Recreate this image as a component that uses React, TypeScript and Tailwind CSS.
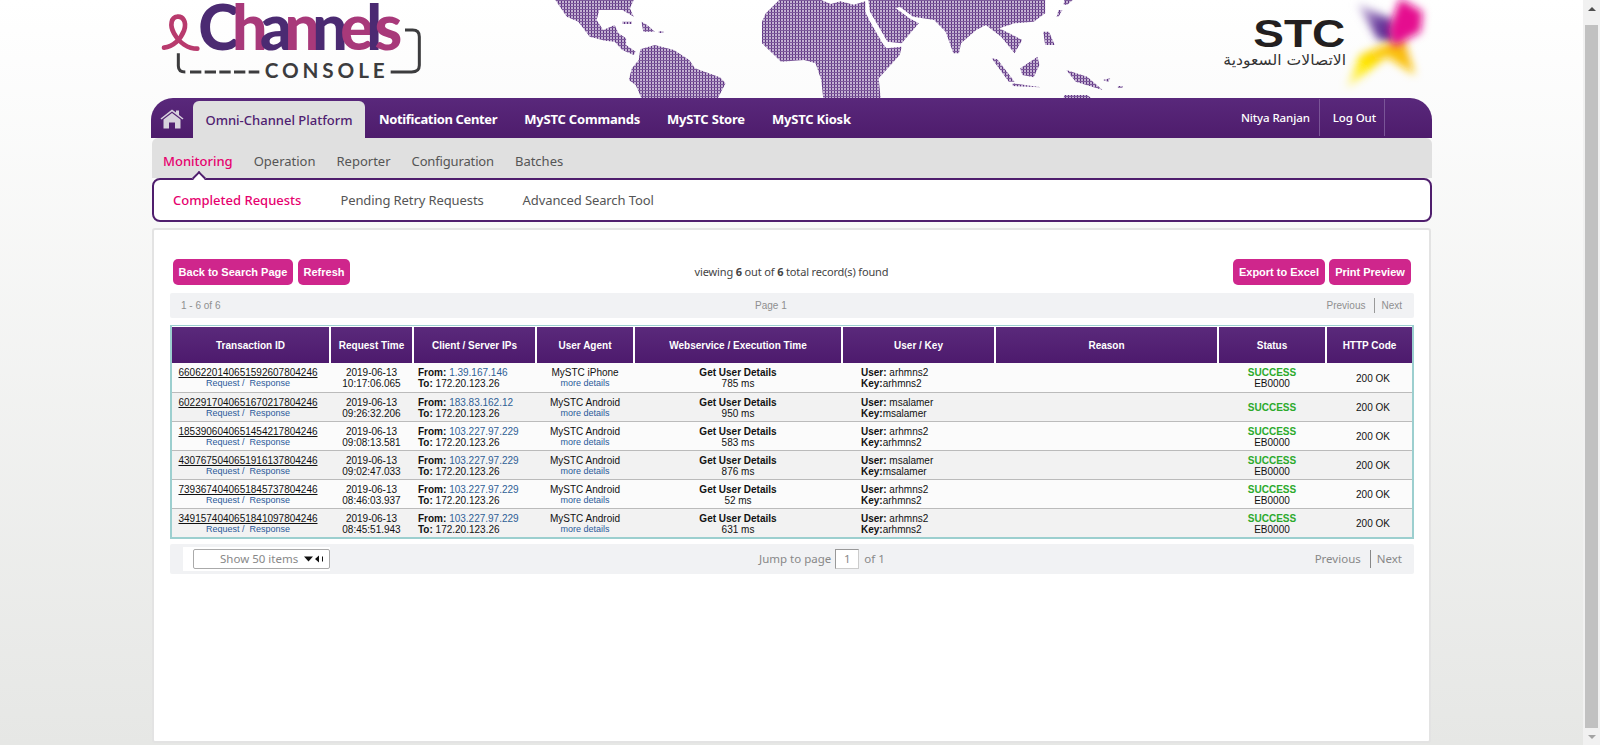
const rows = [
  { id: "6606220140651592607804246", date: "2019-06-13", time: "10:17:06.065", ip: "1.39.167.146", agent: "MySTC iPhone", ms: "785 ms", user: "arhmns2", code: "EB0000" },
  { id: "6022917040651670217804246", date: "2019-06-13", time: "09:26:32.206", ip: "183.83.162.12", agent: "MySTC Android", ms: "950 ms", user: "msalamer", code: "" },
  { id: "1853906040651454217804246", date: "2019-06-13", time: "09:08:13.581", ip: "103.227.97.229", agent: "MySTC Android", ms: "583 ms", user: "arhmns2", code: "EB0000" },
  { id: "4307675040651916137804246", date: "2019-06-13", time: "09:02:47.033", ip: "103.227.97.229", agent: "MySTC Android", ms: "876 ms", user: "msalamer", code: "EB0000" },
  { id: "7393674040651845737804246", date: "2019-06-13", time: "08:46:03.937", ip: "103.227.97.229", agent: "MySTC Android", ms: "52 ms", user: "arhmns2", code: "EB0000" },
  { id: "3491574040651841097804246", date: "2019-06-13", time: "08:45:51.943", ip: "103.227.97.229", agent: "MySTC Android", ms: "631 ms", user: "arhmns2", code: "EB0000" },
];

const columns = [
  { label: "Transaction ID", width: "w-[158px]" },
  { label: "Request Time", width: "w-[83px]" },
  { label: "Client / Server IPs", width: "w-[123px]" },
  { label: "User Agent", width: "w-[98px]" },
  { label: "Webservice / Execution Time", width: "w-[208px]" },
  { label: "User / Key", width: "w-[153px]" },
  { label: "Reason", width: "w-[223px]" },
  { label: "Status", width: "w-[108px]" },
  { label: "HTTP Code", width: "w-[86px]" },
];

const MAP_SHAPES = [
  "40,0 245,0 235,25 245,50 215,30 155,30 148,60 165,90 195,75 205,100 225,115 225,135 250,155 245,165 215,150 195,125 170,122 130,110 100,65 70,50",
  "215,65 240,65 240,72 215,72",
  "265,65 280,75 300,95 270,95",
  "310,94 322,94 322,99 310,99",
  "262,148 300,135 350,150 390,180 405,205 470,232 485,250 465,294 265,294 250,255 232,240 240,205 258,180",
  "580,65 590,40 625,0 735,0 760,12 785,4 820,14 850,4 850,35 860,60 895,130 905,145 945,140 940,165 885,235 890,294 740,294 735,240 720,190 690,180 630,185 580,130",
  "858,0 1320,0 1320,40 1290,65 1240,70 1200,85 1260,120 1240,160 1205,110 1165,75 1140,90 1100,130 1095,160 1080,160 1060,95 1030,60 975,50 940,20 930,25 965,55 990,70 945,130 908,125 875,60 862,35",
  "1180,175 1195,178 1240,245 1225,245",
  "1255,205 1300,170 1305,195 1290,232 1260,225",
  "1235,250 1310,262 1235,258",
  "1315,95 1330,95 1345,135 1320,135",
  "1375,210 1430,230 1470,270 1400,245",
  "1370,285 1430,285 1440,294 1368,294",
  "1510,258 1522,258 1522,263 1510,263",
  "1470,240 1490,235 1485,245",
  "1370,0 1392,0 1378,14 1368,14",
  "1355,30 1365,30 1355,50 1350,50",
];

function WorldMap() {
  return (
    <svg width="600" height="98" viewBox="0 0 600 98" className="block">
      <defs>
        <pattern id="dots" width="3" height="3" patternUnits="userSpaceOnUse">
          <rect width="3" height="3" fill="#c4b2d3" />
          <rect width="1" height="3" fill="#5f3583" />
          <rect width="3" height="1" fill="#7d5a9b" />
        </pattern>
        <clipPath id="land">
          {MAP_SHAPES.map((p) => (
            <polygon key={p} points={p} transform="scale(0.3827 0.3333)" />
          ))}
        </clipPath>
      </defs>
      <rect width="600" height="98" fill="url(#dots)" clipPath="url(#land)" />
    </svg>
  );
}

function ChannelsLogo() {
  return (
    <svg width="270" height="90" viewBox="0 0 810 270" className="block">
      <path d="M12 143 C40 140 62 118 72 92 C82 62 66 48 52 50 C34 52 28 75 42 100 C58 128 84 146 112 146" fill="none" stroke="#b83a6d" strokeWidth="14" strokeLinecap="round" />
      <path d="M55 160 V198 Q55 216 76 216" fill="none" stroke="#3c3c3e" strokeWidth="9" />
      <path d="M90 216 H298" fill="none" stroke="#3c3c3e" strokeWidth="9" strokeDasharray="34 10" />
      <path d="M692 216 H755 Q778 216 778 196 V110 Q778 90 758 90 H735" fill="none" stroke="#3c3c3e" strokeWidth="9" />
      <text x="115" y="150" fontFamily="Lato, sans-serif" fontWeight="900" fontSize="188" textLength="612" lengthAdjust="spacing">
        <tspan fill="#4b2a72">C</tspan>
        <tspan fill="#a8397a">h</tspan>
        <tspan fill="#4b2a72">a</tspan>
        <tspan fill="#a8397a">n</tspan>
        <tspan fill="#4b2a72">n</tspan>
        <tspan fill="#a8397a">e</tspan>
        <tspan fill="#4b2a72">l</tspan>
        <tspan fill="#a8397a">s</tspan>
      </text>
      <text x="314" y="235" fontFamily="Lato, sans-serif" fontWeight="700" fontSize="62" fill="#3c3c3e" textLength="360" lengthAdjust="spacing">CONSOLE</text>
    </svg>
  );
}

function StcLogo() {
  return (
    <svg width="230" height="95" viewBox="0 0 690 285" className="block">
      <defs>
        <filter id="soft" x="-50%" y="-50%" width="200%" height="200%">
          <feGaussianBlur stdDeviation="12" />
        </filter>
        <linearGradient id="wing" x1="0" y1="0" x2="1" y2="1">
          <stop offset="0" stopColor="#e2d9ee" />
          <stop offset="0.55" stopColor="#6b3d9e" />
          <stop offset="1" stopColor="#4f2686" />
        </linearGradient>
        <linearGradient id="flame" x1="0" y1="1" x2="1" y2="0">
          <stop offset="0" stopColor="#fff6a0" />
          <stop offset="0.35" stopColor="#ffe900" />
          <stop offset="1" stopColor="#f59a1c" />
        </linearGradient>
      </defs>
      <polygon points="440,10 550,60 560,125 505,120" fill="url(#wing)" filter="url(#soft)" />
      <polygon points="410,265 450,165 580,110 615,225 530,170" fill="url(#flame)" filter="url(#soft)" />
      <polygon points="570,-5 638,35 632,95 550,140 535,90" fill="#e5108f" filter="url(#soft)" />
      <text x="130" y="140" fontFamily="Liberation Sans, sans-serif" fontWeight="700" fontSize="114" fill="#231f20" textLength="276" lengthAdjust="spacingAndGlyphs">STC</text>
      <text x="408" y="195" direction="rtl" fontFamily="DejaVu Sans, sans-serif" fontSize="44" fill="#333333" textLength="368" lengthAdjust="spacingAndGlyphs">الاتصالات السعودية</text>
    </svg>
  );
}

function HomeIcon() {
  return (
    <svg width="24" height="20" viewBox="0 0 24 20">
      <path d="M0.5 9.5 L12 0.5 L16 3.5 V1.5 H19 V6 L23.5 9.5 L22.5 10.5 L12 2.5 L1.5 10.5 Z" fill="#d8d2dd" />
      <path d="M3.5 10.5 L12 4 L20.5 10.5 V19.5 H15 V13.5 H9 V19.5 H3.5 Z" fill="#d8d2dd" />
    </svg>
  );
}

function Scrollbar() {
  return (
    <div className="flex h-[745px] w-[17px] shrink-0 flex-col bg-[#f1f1f1]">
      <div className="flex h-[25px] items-center justify-center pb-[8px]">
        <div className="h-0 w-0 border-x-[4px] border-b-[4px] border-x-transparent border-b-[#505050]" />
      </div>
      <div className="ml-[2px] w-[13px] flex-1 bg-[#c1c1c1]" />
      <div className="flex h-[17px] items-center justify-center">
        <div className="h-0 w-0 border-x-[4px] border-t-[4px] border-x-transparent border-t-[#a3a3a3]" />
      </div>
    </div>
  );
}

function PinkButton({ children, className }: { children: string; className: string }) {
  return (
    <button className={`h-[26px] rounded-[5px] bg-[#cf268c] text-center text-[11px] font-bold text-white ${className}`}>
      {children}
    </button>
  );
}

export default function App() {
  return (
    <div className="flex h-[745px] overflow-hidden font-['Noto_Sans',sans-serif]">
      <div className="h-[745px] min-w-0 flex-1 bg-gradient-to-b from-white to-[#e6e7e5]">
        <header className="flex h-[98px] overflow-hidden">
          <div className="ml-[160px] w-[380px]">
            <ChannelsLogo />
          </div>
          <WorldMap />
          <div className="ml-[70px]">
            <StcLogo />
          </div>
        </header>

        <nav className="ml-[151px] flex h-[40px] w-[1281px] rounded-t-[22px] bg-gradient-to-b from-[#59287b] to-[#4e1c6c] text-white">
          <div className="flex w-[42px] items-center justify-center pt-[2px]">
            <HomeIcon />
          </div>
          <div className="mt-[3px] flex w-[172px] items-center justify-center rounded-t-[6px] bg-[#e0e0e0] pt-[2px] text-[13px] font-medium text-[#4f2070]">
            Omni-Channel Platform
          </div>
          <ul className="ml-[14px] flex gap-[27px] text-[13px] font-bold tracking-[-0.2px]">
            <li className="pt-[12px] tracking-[-0.35px]">Notification Center</li>
            <li className="pt-[12px]">MySTC Commands</li>
            <li className="pt-[12px]">MySTC Store</li>
            <li className="pt-[12px]">MySTC Kiosk</li>
          </ul>
          <div className="ml-auto mr-[47px] flex h-[38px] pt-[1px] text-[11.5px] font-medium tracking-[-0.1px]">
            <div className="flex items-center border-r border-[#7a5597] pr-[9px]">Nitya Ranjan</div>
            <div className="flex items-center border-r border-[#7a5597] pl-[13px] pr-[8px]">Log Out</div>
          </div>
        </nav>

        <div className="ml-[152px] flex h-[40px] w-[1280px] items-center gap-[21px] rounded-t-[6px] bg-[#e0e0e0] pl-[11px] pt-[7px] text-[13px] text-[#555555]">
          <span className="font-medium text-[#e6006e]">Monitoring</span>
          <span>Operation</span>
          <span>Reporter</span>
          <span className="tracking-[-0.15px]">Configuration</span>
          <span>Batches</span>
        </div>

        <div className="relative ml-[152px] flex h-[44px] w-[1280px] items-center gap-[39px] rounded-[8px] border-2 border-[#4f1e6d] bg-white pl-[19px] pt-[2px] text-[13px] text-[#555555]">
          <div className="absolute -top-[7px] left-[40px] h-[10px] w-[10px] rotate-45 border-l-2 border-t-2 border-[#4f1e6d] bg-white" />
          <span className="font-medium text-[#e6006e]">Completed Requests</span>
          <span className="tracking-[-0.1px]">Pending Retry Requests</span>
          <span className="tracking-[-0.1px]">Advanced Search Tool</span>
        </div>

        <main className="ml-[152px] mt-[6px] h-[515px] w-[1279px] rounded-[3px] border-2 border-[#e3e3e3] bg-white pl-[16px] pr-[15px] pt-[29px] font-['Liberation_Sans',sans-serif]">
          <div className="flex h-[26px] items-center justify-between pl-[3px] pr-[3px]">
            <div className="flex gap-[5px]">
              <PinkButton className="w-[120px]">Back to Search Page</PinkButton>
              <PinkButton className="w-[52px]">Refresh</PinkButton>
            </div>
            <p className="font-['Noto_Sans',sans-serif] text-[11px] tracking-[-0.15px] text-[#444444]">
              viewing <b>6</b> out of <b>6</b> total record(s) found
            </p>
            <div className="flex gap-[4px]">
              <PinkButton className="w-[92px]">Export to Excel</PinkButton>
              <PinkButton className="w-[82px]">Print Preview</PinkButton>
            </div>
          </div>

          <div className="mt-[8px] flex h-[25px] w-[1244px] items-center rounded-[2px] bg-[#f1f2f4] pr-[12px] text-[10px] text-[#8f8f8f]">
            <span className="w-[585px] pl-[11px]">1 - 6 of 6</span>
            <span>Page 1</span>
            <span className="ml-auto border-r border-[#999999] pr-[9px]">Previous</span>
            <span className="pl-[6px]">Next</span>
          </div>

          <div className="mt-[7px] w-[1244px] border-b-2 border-l-2 border-r-2 border-t border-[#9ccfcf] pt-[1px]">
            <table className="w-[1240px] table-fixed border-collapse text-[10px] leading-[11px] text-[#111111]">
              <thead>
                <tr>
                  {columns.map((c, i) => (
                    <th
                      key={c.label}
                      className={`h-[36px] bg-gradient-to-b from-[#5a297b] to-[#4d1a6d] p-0 text-center text-[10px] font-bold text-white ${c.width} ${i < 8 ? "border-r-2 border-white" : ""}`}
                    >
                      {c.label}
                    </th>
                  ))}
                </tr>
              </thead>
              <tbody>
                {rows.map((r, i) => (
                  <tr key={r.id} className={`h-[29px] border-b border-[#bbbbbb] last:border-b-0 ${i % 2 === 0 ? "bg-[#fbfbfb]" : "bg-[#f2f2f2]"}`}>
                    <td className="p-0 pr-[6px] pt-[2px] text-center">
                      <div className="underline">{r.id}</div>
                      <div className="text-[9px] text-[#2a5a9a]">Request /&nbsp; Response</div>
                    </td>
                    <td className="p-0 pt-[2px] text-center">
                      {r.date}
                      <br />
                      {r.time}
                    </td>
                    <td className="p-0 pl-[5px] pt-[2px]">
                      <b>From:</b> <span className="text-[#2f5f96]">{r.ip}</span>
                      <br />
                      <b>To:</b> 172.20.123.26
                    </td>
                    <td className="p-0 pt-[2px] text-center">
                      <div>{r.agent}</div>
                      <div className="text-[9px] text-[#2a5a9a]">more details</div>
                    </td>
                    <td className="p-0 pt-[2px] text-center">
                      <b>Get User Details</b>
                      <br />
                      {r.ms}
                    </td>
                    <td className="p-0 pl-[19px] pt-[2px]">
                      <b>User:</b> {r.user}
                      <br />
                      <b>Key:</b>
                      {r.user}
                    </td>
                    <td className="p-0" />
                    <td className="p-0 pt-[2px] text-center">
                      <div className="font-bold text-[#2caa2c]">SUCCESS</div>
                      {r.code && <div>{r.code}</div>}
                    </td>
                    <td className="p-0 pl-[8px] pt-[2px] text-center">200 OK</td>
                  </tr>
                ))}
              </tbody>
            </table>
          </div>

          <div className="mt-[5px] flex h-[30px] w-[1244px] items-center rounded-[2px] bg-[#f1f2f4] pr-[12px] font-['Noto_Sans',sans-serif] text-[11.5px] text-[#888888]">
            <div className="ml-[13px] flex h-[24px] w-[147px] items-center bg-white pl-[10px]">
              <div className="flex h-[20px] w-[137px] items-center rounded-[2px] border border-[#aaaaaa] pl-[26px]">
                Show 50 items
                <svg width="20" height="8" viewBox="0 0 20 8" className="ml-[6px]">
                  <path d="M0 1.5H9L4.5 6.5Z M11 4L15 0.5V7.5Z M18 1.5H19V6.5H18Z" fill="#111111" />
                </svg>
              </div>
            </div>
            <span className="ml-[429px]">Jump to page</span>
            <span className="ml-[4px] flex h-[20px] w-[24px] items-center justify-center border border-[#cccccc] border-l-[#999999] border-t-[#999999] bg-white">1</span>
            <span className="ml-[5px]">of 1</span>
            <span className="ml-auto border-r border-[#888888] pr-[9px]">Previous</span>
            <span className="pl-[6px]">Next</span>
          </div>
        </main>
      </div>
      <Scrollbar />
    </div>
  );
}
